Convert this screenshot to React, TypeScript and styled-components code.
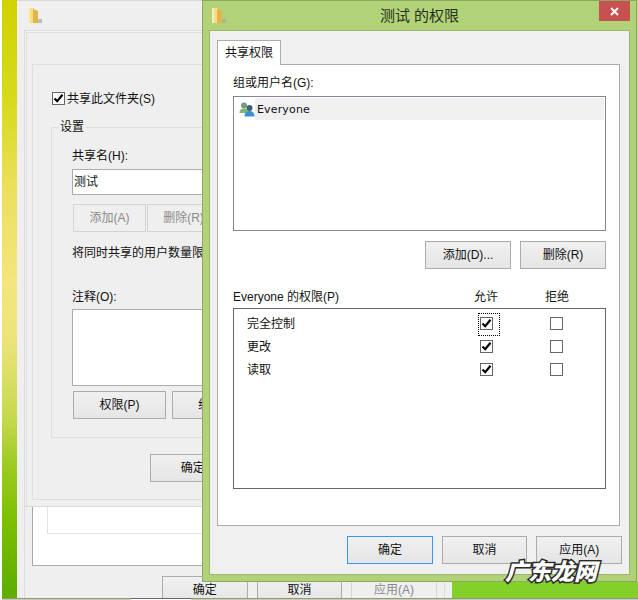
import styled, { createGlobalStyle } from 'styled-components';

const GlobalStyle = createGlobalStyle`
  html, body {
    margin: 0;
    padding: 0;
    background: #fff;
  }
  * {
    box-sizing: border-box;
  }
`;

const Desktop = styled.div`
  position: relative;
  width: 638px;
  height: 600px;
  overflow: hidden;
  font-family: 'Liberation Sans', 'Noto Sans CJK SC', sans-serif;
  font-size: 12px;
  line-height: 16px;
  color: #111;
  background:
    linear-gradient(#fff, #fff) 0 0 / 2px 100% no-repeat,
    linear-gradient(
        #cfd300 0,
        #d6da1c 100px,
        #ebe05e 190px,
        #f2e67c 280px,
        #ece47a 340px,
        #c5d84c 420px,
        #9ccb22 465px,
        #7cc000 520px,
        #5fae00 590px
      )
      2px 0 / 15px 100% no-repeat,
    #84d02a;
`;

const BackWindow = styled.div`
  position: absolute;
  left: 17px;
  top: 0;
  width: 435px;
  height: 598px;
  overflow: hidden;
  background: #efefef;
  border-top: 1px solid #d8d8d8;
`;

const BackTitle = styled.div`
  height: 29px;
  padding-left: 11px;
  display: flex;
  align-items: center;
`;

const BackFrame = styled.div`
  height: 568px;
  margin: 0 7px;
  border-left: 1px solid #dcdcdc;
  border-right: 1px solid #dcdcdc;
  padding: 10px 7px 0;
`;

const BackPanel = styled.div`
  height: 526px;
  background: #fff;
  border: 1px solid #aaa;
  padding: 14px 14px 31px;
`;

const BackGroup = styled.div`
  height: 100%;
  border: 1px solid #e2e2e2;
`;

const BackFooter = styled.div`
  display: flex;
  gap: 9px;
  padding: 10px 0 0 130px;
`;

const SharingWindow = styled.div`
  position: absolute;
  left: 24px;
  top: 30px;
  width: 420px;
  height: 477px;
  background: #f5f5f5;
  border: 1px solid #dadada;
`;

const SharingInner = styled.div`
  height: 474px;
  margin-left: 1px;
  margin-top: 1px;
  padding: 31px 0 0 5px;
  background: #efefef;
  border-left: 1px solid #dedede;
  border-top: 1px solid #dedede;
`;

const SharingPanel = styled.div`
  height: 436px;
  padding: 27px 0 0 19px;
  border: 1px solid #dedede;
`;

const ShareToggle = styled.label`
  display: flex;
  align-items: center;
  gap: 2px;
  height: 13px;
  margin-bottom: 14px;
`;

const GroupBox = styled.fieldset`
  margin: 0 0 0 -1px;
  padding: 13px 0 18px 20px;
  min-width: 0;
  border: 1px solid #dedede;
`;

const GroupTitle = styled.legend`
  margin-left: -14px;
  padding: 0 2px;
  line-height: 16px;
`;

const FieldLabel = styled.div<{ $top: number }>`
  margin-top: ${(p) => p.$top}px;
  white-space: nowrap;
`;

const NameInput = styled.div`
  margin-top: 5px;
  height: 26px;
  padding: 4px 1px;
  background: #fff;
  border: 1px solid #acacac;
`;

const CommentBox = styled.div`
  margin-top: 4px;
  height: 77px;
  background: #fff;
  border: 1px solid #acacac;
`;

const ButtonRow = styled.div<{ $top: number; $gap: number }>`
  display: flex;
  gap: ${(p) => p.$gap}px;
  margin-top: ${(p) => p.$top}px;
  padding-left: 1px;
`;

const PushButton = styled.button<{ $w?: number; $default?: boolean; $muted?: boolean }>`
  flex: none;
  width: ${(p) => p.$w ?? 85.6}px;
  height: 28px;
  padding: 0;
  font: inherit;
  white-space: nowrap;
  color: ${(p) => (p.$muted ? '#8a8a8a' : '#111')};
  background: ${(p) => (p.$muted ? '#efefef' : 'linear-gradient(#f0f0f0, #e5e5e5)')};
  border: 1px solid ${(p) => (p.$default ? '#3399ff' : p.$muted ? '#d4d4d4' : '#acacac')};
`;

const SharingOk = styled.div`
  margin: 16px 0 0 98px;
`;

const PermWindow = styled.div`
  position: absolute;
  left: 202px;
  top: 0;
  width: 435px;
  height: 582px;
  background: #b1d279;
  border: 1px solid #8fa860;
  box-shadow: 1px 0 0 #c7dc8f;
`;

const PermTitleBar = styled.div`
  height: 29px;
  padding: 0 6px;
  display: grid;
  grid-template-columns: 1fr auto 1fr;
  align-items: center;
`;

const PermIconSlot = styled.div`
  display: flex;
  padding-left: 3px;
`;

const WindowName = styled.div`
  font-size: 15px;
  line-height: 20px;
  color: #26331a;
`;

const CloseButton = styled.div`
  justify-self: end;
  align-self: start;
  width: 31px;
  height: 20px;
  background: #c75050;
  display: flex;
  align-items: center;
  justify-content: center;
`;

const PermContent = styled.div`
  height: 545px;
  margin: 0 6px;
  padding: 9px 7px 0;
  background: #f0f0f0;
  border: 1px solid #9db86c;
`;

const Tab = styled.div`
  position: relative;
  width: 64px;
  height: 25px;
  margin-bottom: -1px;
  padding-top: 4px;
  text-align: center;
  background: #fff;
  border: 1px solid #acacac;
  border-bottom: none;
`;

const TabPanel = styled.div`
  width: 403px;
  padding: 10px 13px 36px 15px;
  background: #fff;
  border: 1px solid #acacac;
`;

const UserList = styled.div`
  margin-top: 5px;
  height: 135px;
  padding: 1px;
  border: 1px solid #828790;
`;

const UserRow = styled.div`
  display: flex;
  align-items: center;
  height: 22px;
  padding-left: 4px;
`;

const UserName = styled.div`
  flex: 1;
  height: 22px;
  padding: 4px 0 0 2px;
  font-family: 'DejaVu Sans', sans-serif;
  font-size: 11px;
  letter-spacing: 0.15px;
  background: #f0f0f0;
`;

const ListActions = styled.div`
  display: flex;
  justify-content: flex-end;
  gap: 9px;
  margin-top: 10px;
`;

const PermHeader = styled.div`
  display: grid;
  grid-template-columns: 241px 71px 1fr;
  margin-top: 20px;
`;

const PermList = styled.div`
  margin-top: 3px;
  height: 181px;
  padding: 3px 0 0 13px;
  border: 1px solid #666;
`;

const PermRow = styled.div`
  display: grid;
  grid-template-columns: 233px 70px 1fr;
  align-items: center;
  height: 23px;
`;

const PermName = styled.span`
  padding-top: 1px;
`;

const CheckBox = styled.span<{ $focus?: boolean }>`
  position: relative;
  display: flex;
  align-items: center;
  justify-content: center;
  width: 13px;
  height: 13px;
  background: #fff;
  border: 1px solid #666;

  ${(p) =>
    p.$focus &&
    `&::after {
      content: '';
      position: absolute;
      left: -3px;
      top: -5px;
      width: 20px;
      height: 21px;
      border: 1px dotted #000;
    }`}
`;

const PermFooter = styled.div`
  display: flex;
  justify-content: flex-end;
  gap: 9px;
  margin-top: 10px;
`;

const TaskStrip = styled.div`
  position: absolute;
  left: 2px;
  right: 0;
  bottom: 0;
  height: 2px;
  background: #c6ccb8;
  border-top: 1px solid #8f9a78;
`;

const TaskTab = styled.div`
  position: absolute;
  left: 129px;
  top: -1px;
  width: 60px;
  height: 2px;
  background: #fff;
  border-top: 1px solid #666;
`;

const Watermark = styled.div`
  position: absolute;
  left: 505px;
  top: 554px;
  font-family: 'Noto Sans CJK SC', sans-serif;
  font-size: 23px;
  line-height: 32px;
  font-weight: 900;
  font-style: italic;
  white-space: nowrap;
  color: #fff;
  -webkit-text-stroke: 3px #2b2b2b;
  paint-order: stroke fill;
`;

const FolderIcon = () => (
  <svg width="15" height="16" viewBox="0 0 15 16">
    <rect x="10" y="11" width="4" height="4" fill="#a8a8a8" opacity="0.7" />
    <rect x="0" y="0" width="6" height="15" fill="#f6dd8a" />
    <path d="M5 1 L10 3 V15 H5 Z" fill="#e3b548" />
    <rect x="0" y="0" width="2" height="15" fill="#fbeeb4" />
  </svg>
);

const UsersIcon = () => (
  <svg width="16" height="16" viewBox="0 0 16 16">
    <circle cx="5" cy="4.5" r="3" fill="#6f9c7c" />
    <path d="M0.5 12 C0.5 8.5 2.5 7.5 5 7.5 C7.5 7.5 9 8.5 9 12 Z" fill="#7fb56f" />
    <circle cx="10.5" cy="7" r="3" fill="#41606e" />
    <path d="M5.5 15.5 C5.5 11.5 8 10 10.5 10 C13 10 15.5 11.5 15.5 15.5 Z" fill="#3a8fd4" />
  </svg>
);

const CheckMark = () => (
  <svg width="11" height="11" viewBox="0 0 11 11">
    <path d="M1.5 5.5 L4.2 8.2 L9.5 1.8" fill="none" stroke="#000" strokeWidth="2.2" />
  </svg>
);

const CloseGlyph = () => (
  <svg width="9" height="9" viewBox="0 0 9 9">
    <path d="M1 1 L8 8 M8 1 L1 8" fill="none" stroke="#fff" strokeWidth="2" />
  </svg>
);

const permissions = ['完全控制', '更改', '读取'];

const App = () => {
  return (
    <Desktop>
      <GlobalStyle />

      <BackWindow>
        <BackTitle>
          <FolderIcon />
        </BackTitle>
        <BackFrame>
          <BackPanel>
            <BackGroup />
          </BackPanel>
          <BackFooter>
            <PushButton>确定</PushButton>
            <PushButton>取消</PushButton>
            <PushButton $muted>应用(A)</PushButton>
          </BackFooter>
        </BackFrame>
      </BackWindow>

      <SharingWindow>
        <SharingInner>
          <SharingPanel>
            <ShareToggle>
              <CheckBox>
                <CheckMark />
              </CheckBox>
              共享此文件夹(S)
            </ShareToggle>
            <GroupBox>
              <GroupTitle>设置</GroupTitle>
              <FieldLabel $top={0}>共享名(H):</FieldLabel>
              <NameInput>测试</NameInput>
              <ButtonRow $top={9} $gap={1}>
                <PushButton $w={73} $muted>添加(A)</PushButton>
                <PushButton $w={73} $muted>删除(R)</PushButton>
              </ButtonRow>
              <FieldLabel $top={13}>将同时共享的用户数量限制为(L):</FieldLabel>
              <FieldLabel $top={28}>注释(O):</FieldLabel>
              <CommentBox />
              <ButtonRow $top={5} $gap={6}>
                <PushButton $w={93}>权限(P)</PushButton>
                <PushButton $w={93}>缓存(C)</PushButton>
              </ButtonRow>
            </GroupBox>
            <SharingOk>
              <PushButton>确定</PushButton>
            </SharingOk>
          </SharingPanel>
        </SharingInner>
      </SharingWindow>

      <PermWindow>
        <PermTitleBar>
          <PermIconSlot>
            <FolderIcon />
          </PermIconSlot>
          <WindowName>测试 的权限</WindowName>
          <CloseButton>
            <CloseGlyph />
          </CloseButton>
        </PermTitleBar>
        <PermContent>
          <Tab>共享权限</Tab>
          <TabPanel>
            <FieldLabel $top={0}>组或用户名(G):</FieldLabel>
            <UserList>
              <UserRow>
                <UsersIcon />
                <UserName>Everyone</UserName>
              </UserRow>
            </UserList>
            <ListActions>
              <PushButton $w={86}>添加(D)...</PushButton>
              <PushButton $w={86}>删除(R)</PushButton>
            </ListActions>
            <PermHeader>
              <span>Everyone 的权限(P)</span>
              <span>允许</span>
              <span>拒绝</span>
            </PermHeader>
            <PermList>
              {permissions.map((name, index) => (
                <PermRow key={name}>
                  <PermName>{name}</PermName>
                  <CheckBox $focus={index === 0}>
                    <CheckMark />
                  </CheckBox>
                  <CheckBox />
                </PermRow>
              ))}
            </PermList>
          </TabPanel>
          <PermFooter>
            <PushButton $default>确定</PushButton>
            <PushButton>取消</PushButton>
            <PushButton>应用(A)</PushButton>
          </PermFooter>
        </PermContent>
      </PermWindow>

      <TaskStrip>
        <TaskTab />
      </TaskStrip>
      <Watermark>广东龙网</Watermark>
    </Desktop>
  );
};

export default App;
